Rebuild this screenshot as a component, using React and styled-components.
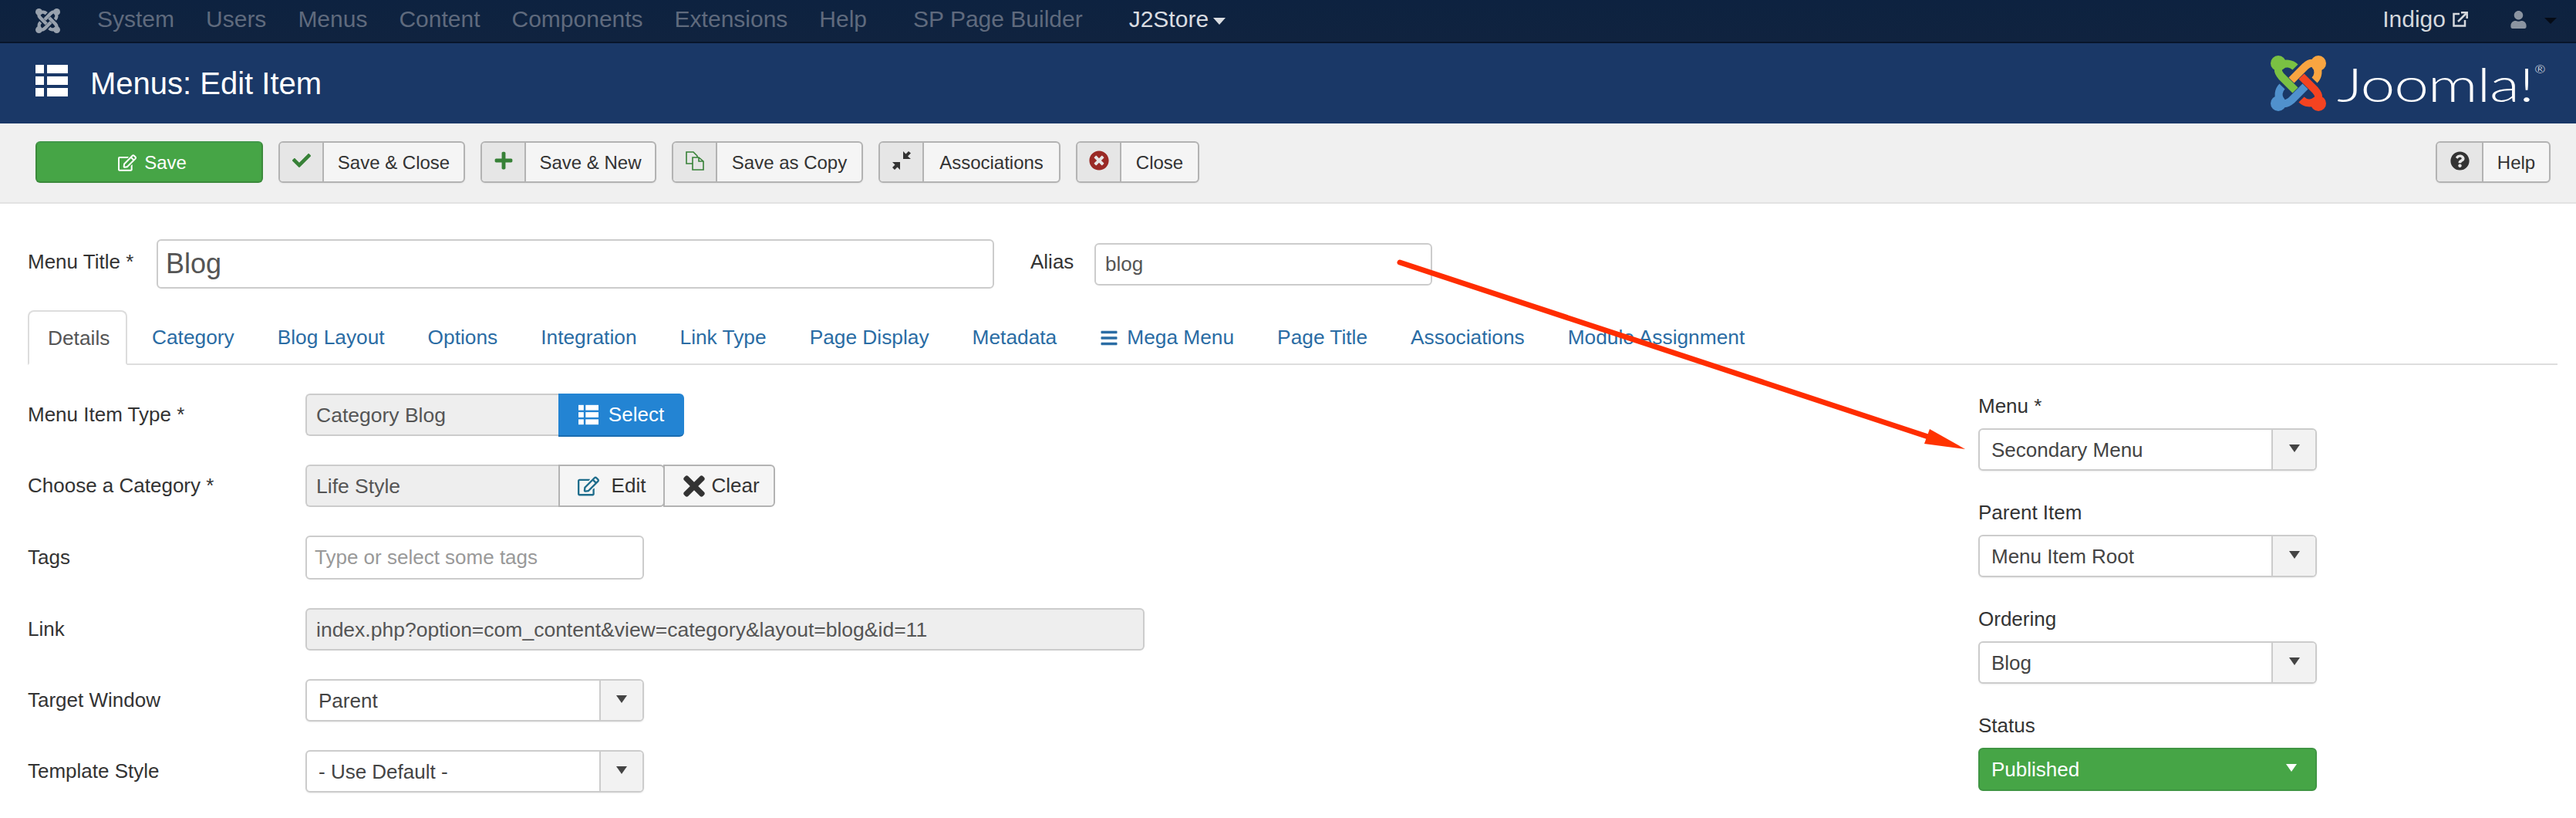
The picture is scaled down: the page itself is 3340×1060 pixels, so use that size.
import styled, { createGlobalStyle } from "styled-components";
import {
  FaCheck,
  FaPlus,
  FaRegEdit,
  FaTimesCircle,
  FaQuestionCircle,
  FaTimes,
  FaBars,
  FaUser,
} from "react-icons/fa";

const GlobalStyle = createGlobalStyle`
  html, body { margin: 0; padding: 0; background: #fff; }
  body { font-family: "Liberation Sans", Arial, sans-serif; color: #333; }
  * { box-sizing: border-box; }
`;

const navItems = [
  { name: "System", left: 0 },
  { name: "Users", left: 0 },
  { name: "Menus", left: 0 },
  { name: "Content", left: 0 },
  { name: "Components", left: 0 },
  { name: "Extensions", left: 0 },
  { name: "Help", left: 0 },
  { name: "SP Page Builder", left: 19 },
];

const tabs = ["Category", "Blog Layout", "Options", "Integration", "Link Type", "Page Display", "Metadata"];
const tabsAfter = ["Page Title", "Associations", "Module Assignment"];

function JoomlaMark({ size, mono }) {
  const colors = mono ? ["#98a1ad", "#98a1ad", "#98a1ad", "#98a1ad"] : ["#7ac143", "#f9a541", "#f44321", "#5091cd"];
  // one link of the logo, turned round the centre for the other three
  const order = [3, 2, 1, 0];
  return (
    <svg width={size} height={size} viewBox="0 0 72 72">
      {order.map((i) => (
        <g key={i} transform={`rotate(${i * 90} 36 36)`}>
          <circle cx="10" cy="10" r="10" fill={colors[i]} />
          <path
            d="M32 45 L14 27 C8 20 9 15 14 13 C19 9 27 10 32 15"
            fill="none"
            stroke={colors[i]}
            strokeWidth="10"
          />
        </g>
      ))}
    </svg>
  );
}

function ListIcon({ width, height }) {
  return (
    <svg width={width} height={height} viewBox="0 0 42 41" fill="currentColor">
      <rect x="0" y="0" width="11" height="11" />
      <rect x="15" y="0" width="27" height="11" />
      <rect x="0" y="15" width="11" height="11" />
      <rect x="15" y="15" width="27" height="11" />
      <rect x="0" y="30" width="11" height="11" />
      <rect x="15" y="30" width="27" height="11" />
    </svg>
  );
}

function CopyIcon() {
  return (
    <svg width="24" height="25" viewBox="0 0 24 25" fill="none" stroke="#378137" strokeWidth="1.6">
      <path d="M1 1 H10 L15 6 V16 H1 Z" />
      <path d="M9 8 H17 L23 13 V24 H9 Z" fill="#e6e6e6" />
      <path d="M17 8 V13 H23" />
    </svg>
  );
}

function CompressIcon() {
  return (
    <svg width="24" height="24" viewBox="0 0 24 24" fill="#333">
      <path d="M14 0 L14 10 L24 10 L20 6.5 L24 2.5 L21 0 L17.500 3.500 Z" />
      <path d="M0 14 L10 14 L10 24 L6.500 20.500 L3 24 L0 21 L3.500 17.500 Z" />
    </svg>
  );
}

function ExternalIcon() {
  return (
    <svg width="20" height="20" viewBox="0 0 20 20" fill="none" stroke="#d5d8dd" strokeWidth="2.500">
      <path d="M9 3 H1.500 V18.500 H16 V11" />
      <path d="M7 13 L18 2" />
      <path d="M11 1.300 H18.700 V9" />
    </svg>
  );
}

function ToolButton({ icon, label, width }) {
  return (
    <ToolBtn $width={width}>
      <ToolIcon>{icon}</ToolIcon>
      <ToolLabel>{label}</ToolLabel>
    </ToolBtn>
  );
}

function SelectBox({ value, width, arrowWidth }) {
  return (
    <Select $width={width}>
      <SelectValue>{value}</SelectValue>
      <SelectArrow $width={arrowWidth}>
        <Caret />
      </SelectArrow>
    </Select>
  );
}

export default function App() {
  return (
    <Page>
      <GlobalStyle />
      <Navbar>
        <NavLogo>
          <JoomlaMark size={32} mono />
        </NavLogo>
        {navItems.map((item) => (
          <NavItem key={item.name} $extra={item.left}>
            {item.name}
          </NavItem>
        ))}
        <NavActive>
          J2Store
          <NavCaret />
        </NavActive>
        <NavRight>
          <SiteLink>
            Indigo
            <ExternalIcon />
          </SiteLink>
          <UserIcon>
            <FaUser size={23} />
          </UserIcon>
          <DarkCaret />
        </NavRight>
      </Navbar>

      <Header>
        <PageTitle>
          <ListIcon width={42} height={41} />
          <h1>Menus: Edit Item</h1>
        </PageTitle>
        <Brand>
          <JoomlaMark size={72} />
          <BrandName>
            Joomla!<sup>®</sup>
          </BrandName>
        </Brand>
      </Header>

      <Toolbar>
        <SaveBtn>
          <FaRegEdit size={24} />
          Save
        </SaveBtn>
        <ToolButton width={242} icon={<FaCheck size={24} color="#378137" />} label="Save & Close" />
        <ToolButton width={228} icon={<FaPlus size={26} color="#378137" />} label="Save & New" />
        <ToolButton width={248} icon={<CopyIcon />} label="Save as Copy" />
        <ToolButton width={236} icon={<CompressIcon />} label="Associations" />
        <ToolButton width={160} icon={<FaTimesCircle size={26} color="#9a2a26" />} label="Close" />
        <HelpWrap>
          <ToolButton width={149} icon={<FaQuestionCircle size={25} color="#333" />} label="Help" />
        </HelpWrap>
      </Toolbar>

      <Content>
        <TitleRow>
          <TitleLabel>Menu Title *</TitleLabel>
          <TitleInput defaultValue="Blog" readOnly />
          <AliasLabel>Alias</AliasLabel>
          <AliasInput defaultValue="blog" readOnly />
        </TitleRow>

        <TabBar>
          <ActiveTab>Details</ActiveTab>
          {tabs.map((t) => (
            <Tab key={t}>{t}</Tab>
          ))}
          <Tab>
            <FaBars size={24} />
            Mega Menu
          </Tab>
          {tabsAfter.map((t) => (
            <Tab key={t}>{t}</Tab>
          ))}
        </TabBar>

        <Columns>
          <Fields>
            <FieldRow>
              <FieldLabel>Menu Item Type *</FieldLabel>
              <InputGroup>
                <ReadOnlyField $width={328}>Category Blog</ReadOnlyField>
                <SelectBtn>
                  <ListIcon width={26} height={27} />
                  Select
                </SelectBtn>
              </InputGroup>
            </FieldRow>
            <FieldRow>
              <FieldLabel>Choose a Category *</FieldLabel>
              <InputGroup>
                <ReadOnlyField $width={328}>Life Style</ReadOnlyField>
                <AddonBtn $width={138}>
                  <FaRegEdit size={28} color="#1f6d8c" />
                  Edit
                </AddonBtn>
                <AddonBtn $width={145} $gap={2}>
                  <ClearIcon>
                    <FaTimes size={40} color="#333" />
                  </ClearIcon>
                  Clear
                </AddonBtn>
              </InputGroup>
            </FieldRow>
            <FieldRow>
              <FieldLabel>Tags</FieldLabel>
              <TagsInput placeholder="Type or select some tags" readOnly />
            </FieldRow>
            <FieldRow>
              <FieldLabel>Link</FieldLabel>
              <ReadOnlyField $width={1088} $round>
                index.php?option=com_content&amp;view=category&amp;layout=blog&amp;id=11
              </ReadOnlyField>
            </FieldRow>
            <FieldRow>
              <FieldLabel>Target Window</FieldLabel>
              <SelectBox value="Parent" width={439} arrowWidth={56} />
            </FieldRow>
            <FieldRow>
              <FieldLabel>Template Style</FieldLabel>
              <SelectBox value="- Use Default -" width={439} arrowWidth={56} />
            </FieldRow>
          </Fields>

          <Side>
            <SideGroup>
              <SideLabel>Menu *</SideLabel>
              <SelectBox value="Secondary Menu" width={439} arrowWidth={57} />
            </SideGroup>
            <SideGroup>
              <SideLabel>Parent Item</SideLabel>
              <SelectBox value="Menu Item Root" width={439} arrowWidth={57} />
            </SideGroup>
            <SideGroup>
              <SideLabel>Ordering</SideLabel>
              <SelectBox value="Blog" width={439} arrowWidth={57} />
            </SideGroup>
            <SideGroup>
              <SideLabel>Status</SideLabel>
              <StatusSelect>
                Published
                <Caret $light />
              </StatusSelect>
            </SideGroup>
          </Side>
        </Columns>
      </Content>

      {/* red annotation arrow drawn on top of the form */}
      <Annotation viewBox="0 0 3340 1060">
        <path d="M1815 340 L2500 566" stroke="#ff2d00" strokeWidth="7" strokeLinecap="round" />
        <polygon points="2548,582 2502,556 2495,575" fill="#ff3300" />
      </Annotation>
    </Page>
  );
}

const Page = styled.div`
  position: relative;
  width: 3340px;
  height: 1060px;
  overflow: hidden;
  background: #fff;
`;

const Navbar = styled.nav`
  display: flex;
  align-items: center;
  height: 56px;
  padding-left: 46px;
  background: linear-gradient(#0d2240, #10233f);
  border-bottom: 2px solid #08162b;
  font-size: 30px;
  line-height: 50px;
`;

const NavLogo = styled.div`
  display: flex;
  width: 80px;
  height: 32px;
`;

const NavItem = styled.span`
  margin-right: 41px;
  margin-left: ${(p) => p.$extra}px;
  margin-bottom: 4px;
  color: #5f6a7d;
`;

const NavActive = styled.span`
  display: flex;
  align-items: center;
  gap: 6px;
  margin-left: 19px;
  margin-bottom: 4px;
  color: #d9dce1;
`;

const NavCaret = styled.span`
  width: 0;
  height: 0;
  margin-top: 4px;
  border-left: 8px solid transparent;
  border-right: 8px solid transparent;
  border-top: 9px solid #d9dce1;
`;

const NavRight = styled.div`
  display: flex;
  align-items: center;
  margin-left: auto;
  margin-bottom: 4px;
  padding-right: 25px;
`;

const SiteLink = styled.span`
  display: flex;
  align-items: center;
  gap: 9px;
  margin-right: 54px;
  font-size: 30px;
  color: #d5d8dd;
`;

const UserIcon = styled.span`
  display: flex;
  margin-right: 22px;
  color: #8b94a1;
`;

const DarkCaret = styled.span`
  width: 0;
  height: 0;
  margin-top: 4px;
  border-left: 8px solid transparent;
  border-right: 8px solid transparent;
  border-top: 8px solid #050b16;
`;

const Header = styled.header`
  display: flex;
  align-items: center;
  justify-content: space-between;
  height: 104px;
  padding: 0 48px 0 46px;
  background: #1a3867;
  color: #fff;
`;

const PageTitle = styled.div`
  display: flex;
  align-items: center;
  gap: 29px;
  margin-top: -8px;

  h1 {
    margin: 0;
    font-size: 40px;
    font-weight: 400;
    line-height: 48px;
    position: relative;
    top: 4px;
  }
`;

const Brand = styled.div`
  display: flex;
  align-items: center;
  gap: 14px;
`;

const BrandName = styled.span`
  display: block;
  width: 262px;
  margin-top: -4px;
  font-family: Lato, "Open Sans", sans-serif;
  font-weight: 300;
  font-size: 62px;
  line-height: 72px;
  letter-spacing: -1px;
  transform: scaleX(1.3);
  transform-origin: left center;
  white-space: nowrap;

  sup {
    font-size: 13px;
    position: relative;
    top: -15px;
    margin-left: 1px;
    vertical-align: super;
  }
`;

const Toolbar = styled.div`
  display: flex;
  align-items: center;
  gap: 20px;
  height: 104px;
  padding: 0 33px 2px 46px;
  background: #f0f0f0;
  border-bottom: 2px solid #e2e2e2;
`;

const SaveBtn = styled.button`
  display: flex;
  align-items: center;
  justify-content: center;
  gap: 10px;
  width: 295px;
  height: 54px;
  padding: 2px 0 0 8px;
  border: 2px solid #3b8a3b;
  border-top-color: #41984a;
  border-radius: 6px;
  background: #46a546;
  color: #fff;
  font: 24px "Liberation Sans", Arial, sans-serif;
`;

const ToolBtn = styled.button`
  display: flex;
  align-items: stretch;
  width: ${(p) => p.$width}px;
  height: 54px;
  padding: 0;
  border: 2px solid #b3b3b3;
  border-radius: 6px;
  background: #f5f5f5;
  overflow: hidden;
  box-shadow: 0 1px 2px rgba(0, 0, 0, 0.05);
  color: #333;
  font: 24px "Liberation Sans", Arial, sans-serif;
`;

const ToolIcon = styled.span`
  display: flex;
  flex: none;
  align-items: center;
  justify-content: center;
  width: 57px;
  padding-bottom: 4px;
  background: #e6e6e6;
  border-right: 2px solid #b3b3b3;
`;

const ToolLabel = styled.span`
  flex: 1;
  align-self: center;
  padding-top: 2px;
  text-align: center;
`;

const HelpWrap = styled.div`
  margin-left: auto;

  ${ToolIcon} {
    width: 60px;
  }
`;

const Content = styled.main`
  padding: 46px 24px 0 36px;
`;

const TitleRow = styled.div`
  display: flex;
  align-items: center;
  height: 64px;
`;

const TitleLabel = styled.label`
  width: 167px;
  font-size: 26px;
  margin-top: -6px;
`;

const TextInput = styled.input`
  border: 2px solid #ccc;
  border-radius: 6px;
  background: #fff;
  color: #555;
  font-family: "Liberation Sans", Arial, sans-serif;
  outline: none;
`;

const TitleInput = styled(TextInput)`
  width: 1086px;
  height: 64px;
  padding: 0 10px;
  font-size: 36px;
`;

const AliasLabel = styled.label`
  width: 83px;
  margin-left: 47px;
  margin-top: -6px;
  font-size: 26px;
`;

const AliasInput = styled(TextInput)`
  width: 438px;
  height: 55px;
  padding: 0 12px;
  font-size: 26px;
`;

const TabBar = styled.div`
  display: flex;
  align-items: flex-end;
  height: 71px;
  margin-top: 28px;
  border-bottom: 2px solid #ddd;
  font-size: 26.3px;
`;

const Tab = styled.span`
  display: flex;
  align-items: center;
  gap: 11px;
  height: 69px;
  padding: 2px 28px 0;
  color: #2a6ca4;
`;

const ActiveTab = styled.span`
  display: flex;
  align-items: center;
  width: 129px;
  height: 71px;
  margin-bottom: -2px;
  margin-right: 4px;
  padding: 2px 24px 0;
  border: 2px solid #ddd;
  border-bottom: 2px solid #fff;
  border-radius: 8px 8px 0 0;
  background: #fff;
  color: #555;
`;

const Columns = styled.div`
  display: flex;
  justify-content: space-between;
  margin-top: 37px;
  padding-right: 312px;
`;

const Fields = styled.div`
  display: flex;
  flex-direction: column;
  gap: 37px;
`;

const FieldRow = styled.div`
  display: flex;
  align-items: center;
  min-height: 55px;
  font-size: 26px;
`;

const FieldLabel = styled.label`
  width: 360px;
  margin-top: 0;
`;

const InputGroup = styled.div`
  display: flex;
  height: 55px;
`;

const ReadOnlyField = styled.div`
  display: flex;
  align-items: center;
  width: ${(p) => p.$width}px;
  height: 55px;
  padding: 2px 12px 0;
  border: 2px solid #ccc;
  border-right-width: ${(p) => (p.$round ? "2px" : "0")};
  border-radius: ${(p) => (p.$round ? "6px" : "6px 0 0 6px")};
  background: #eee;
  color: #555;
  font-size: 26.5px;
`;

const SelectBtn = styled.button`
  display: flex;
  flex: none;
  align-items: center;
  justify-content: center;
  gap: 13px;
  width: 163px;
  height: 56px;
  border: 0;
  border-bottom: 2px solid #1a6cb0;
  border-radius: 0 6px 6px 0;
  background: #2384d3;
  color: #fff;
  font: 26px "Liberation Sans", Arial, sans-serif;
`;

const AddonBtn = styled.button`
  display: flex;
  flex: none;
  align-items: center;
  justify-content: center;
  gap: ${(p) => p.$gap || 16}px;
  width: ${(p) => p.$width}px;
  height: 55px;
  margin-right: -2px;
  padding: 0;
  border: 2px solid #b3b3b3;
  border-radius: 0 6px 6px 0;
  background: #f5f5f5;
  color: #333;
  font: 26px "Liberation Sans", Arial, sans-serif;
`;

const ClearIcon = styled.span`
  display: flex;
  height: 30px;
  align-items: center;
`;

const TagsInput = styled(TextInput)`
  width: 439px;
  height: 57px;
  padding: 0 10px;
  font-size: 26px;

  &::placeholder {
    color: #999;
  }
`;

const Select = styled.div`
  display: flex;
  align-items: stretch;
  width: ${(p) => p.$width}px;
  height: 55px;
  border: 2px solid #ccc;
  border-radius: 6px;
  background: #fff;
  box-shadow: 0 1px 2px rgba(0, 0, 0, 0.08);
  overflow: hidden;
  font-size: 26px;
`;

const SelectValue = styled.span`
  flex: 1;
  align-self: center;
  padding: 2px 0 0 15px;
  color: #444;
`;

const SelectArrow = styled.span`
  display: flex;
  flex: none;
  align-items: center;
  justify-content: center;
  width: ${(p) => p.$width}px;
  border-left: 2px solid #ccc;
  background: #f2f2f2;
`;

const Caret = styled.span`
  width: 0;
  height: 0;
  margin-bottom: 4px;
  border-left: 7px solid transparent;
  border-right: 7px solid transparent;
  border-top: 10px solid ${(p) => (p.$light ? "#fff" : "#444")};
`;

const Side = styled.aside`
  display: flex;
  flex-direction: column;
  gap: 38px;
`;

const SideGroup = styled.div`
  display: flex;
  flex-direction: column;
  gap: 13px;
`;

const SideLabel = styled.label`
  height: 32px;
  font-size: 26px;
  line-height: 32px;
`;

const StatusSelect = styled.div`
  display: flex;
  align-items: center;
  justify-content: space-between;
  width: 439px;
  height: 56px;
  padding: 0 24px 0 15px;
  border: 2px solid #3f9543;
  border-radius: 6px;
  background: #46a546;
  color: #fff;
  font-size: 26px;
`;

const Annotation = styled.svg`
  position: absolute;
  top: 0;
  left: 0;
  width: 3340px;
  height: 1060px;
  pointer-events: none;
`;
